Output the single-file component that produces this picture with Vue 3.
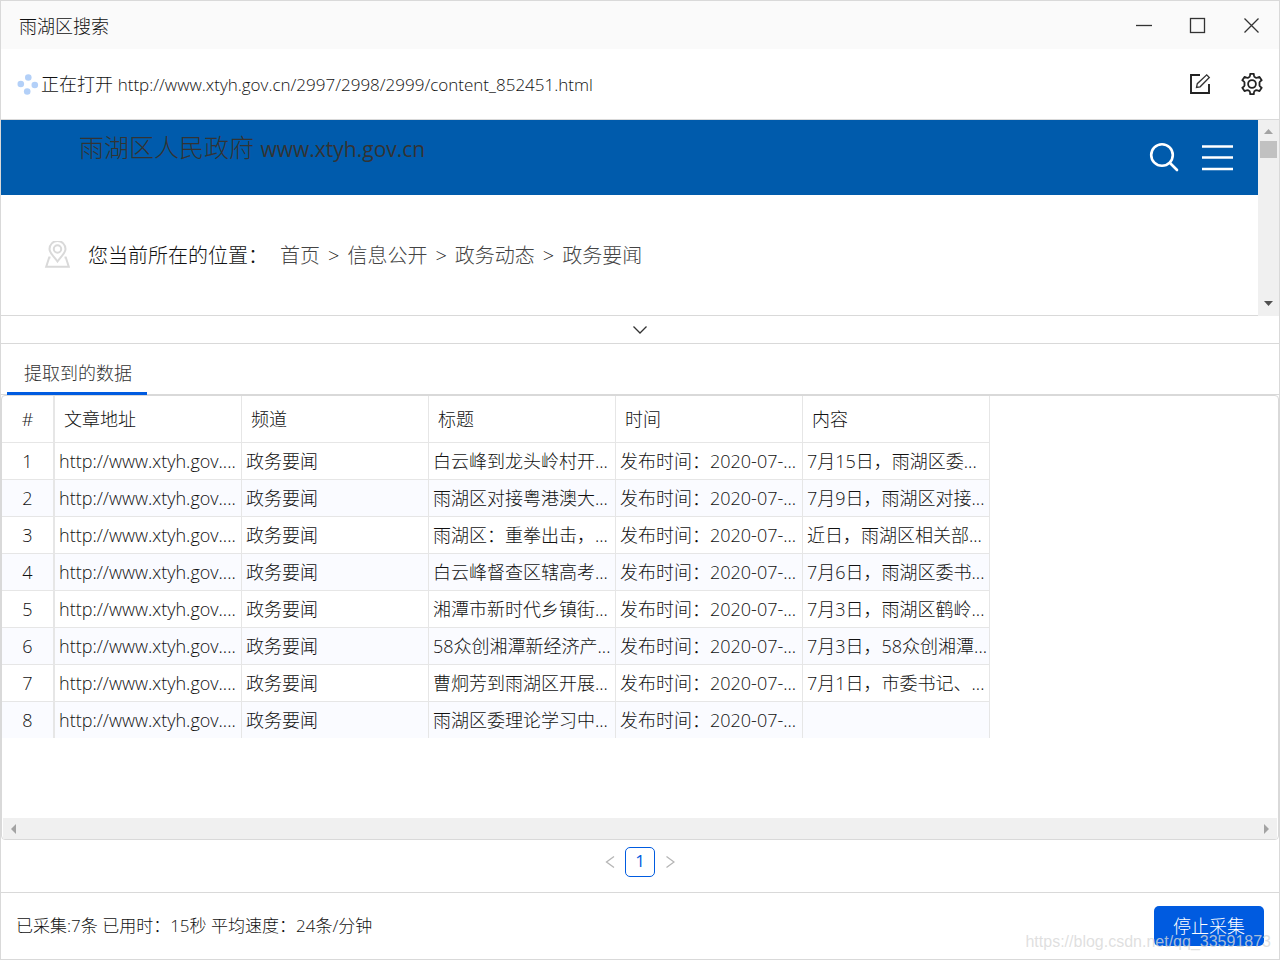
<script setup>
import { ref } from 'vue'

const columns = ['文章地址', '频道', '标题', '时间', '内容']
const url = 'http://www.xtyh.gov....'
const time = '发布时间：2020-07-...'
const rows = [
  ['白云峰到龙头岭村开...', '7月15日，雨湖区委...'],
  ['雨湖区对接粤港澳大...', '7月9日，雨湖区对接...'],
  ['雨湖区：重拳出击，...', '近日，雨湖区相关部...'],
  ['白云峰督查区辖高考...', '7月6日，雨湖区委书...'],
  ['湘潭市新时代乡镇街...', '7月3日，雨湖区鹤岭...'],
  ['58众创湘潭新经济产...', '7月3日，58众创湘潭...'],
  ['曹炯芳到雨湖区开展...', '7月1日，市委书记、...'],
  ['雨湖区委理论学习中...', ''],
].map(([title, content]) => [url, '政务要闻', title, time, content])
const crumbs = ['首页', '信息公开', '政务动态', '政务要闻']
const page = ref(1)
</script>

<template>
  <div class="window" lang="zh-CN">
    <header class="titlebar">
      <h1>雨湖区搜索</h1>
      <div class="controls">
        <button type="button" aria-label="最小化">
          <svg width="18" height="18" viewBox="0 0 18 18"><path d="M2 8.500h16" /></svg>
        </button>
        <button type="button" aria-label="最大化">
          <svg width="18" height="18" viewBox="0 0 18 18"><rect x="2.500" y="1.500" width="14" height="14" /></svg>
        </button>
        <button type="button" aria-label="关闭">
          <svg width="18" height="18" viewBox="0 0 18 18"><path d="M2.500 1.500l14 14M16.500 1.500l-14 14" /></svg>
        </button>
      </div>
    </header>

    <div class="toolbar">
      <svg class="spinner" width="22" height="22" viewBox="0 0 22 22">
        <circle cx="11.300" cy="4.500" r="3.300" /><circle cx="3.800" cy="11" r="3.300" />
        <circle cx="17.800" cy="12" r="3.300" /><circle cx="10.200" cy="18.500" r="3.300" />
      </svg>
      <span class="status">正在打开 <span class="address">http://www.xtyh.gov.cn/2997/2998/2999/content_852451.html</span></span>
      <div class="tools">
        <button type="button" aria-label="编辑">
          <svg width="24" height="24" viewBox="0 0 24 24">
            <path class="thick" d="M12 3H3v18h18v-9" />
            <path d="M8.500 15.500l.8-3.800L18.700 2.900l2.600 2.600-9.200 9.300z" />
          </svg>
        </button>
        <button type="button" aria-label="设置">
          <svg width="24" height="24" viewBox="0 0 24 24">
            <path class="gear" d="M9.700 4.700Q10.100 4.300 10.200 1.900h3.600Q13.900 4.300 14.300 4.700l2 1.200Q17 5.900 19.500 4.900l2.200 3.400Q19.600 9.600 19.500 10.400v3.200Q19.600 14.400 21.700 15.700L19.500 19.100Q17 18.100 16.300 18.100l-2 1.200Q13.900 19.700 13.800 22.100h-3.600Q10.100 19.700 9.700 19.300l-2-1.200Q7 18.100 4.500 19.100L2.300 15.700Q4.400 14.400 4.500 13.600v-3.200Q4.400 9.600 2.300 8.300L4.500 4.900Q7 5.900 7.700 5.900z" />
            <circle class="gear" cx="12" cy="12" r="3.900" />
          </svg>
        </button>
      </div>
    </div>

    <section class="browser">
      <div class="page">
        <div class="banner">
          <div class="site">雨湖区人民政府 <span>www.xtyh.gov.cn</span></div>
          <div class="site-tools">
            <button type="button" aria-label="搜索">
              <svg width="32" height="32" viewBox="0 0 32 32"><circle cx="14" cy="13" r="10.800" /><path d="M22 21l7 7" stroke-linecap="round" /></svg>
            </button>
            <button type="button" aria-label="菜单">
              <svg width="32" height="32" viewBox="0 0 32 32"><path d="M0 4.500h31M0 15.500h31M0 27h31" /></svg>
            </button>
          </div>
        </div>
        <nav class="crumbs" aria-label="当前位置">
          <svg width="26" height="30" viewBox="0 0 26 30">
            <path d="M13.500 20.500C10 15.500 5.500 12 5.500 8a8 8 0 0 1 16 0c0 4-4.500 7.500-8 12.500z" />
            <circle cx="13.500" cy="8" r="3.700" />
            <path d="M6.500 16.500H5.200L2.200 25.800h22.600l-3-9.300H20.500" />
          </svg>
          <span class="here">您当前所在的位置：</span>
          <template v-for="(c, i) in crumbs" :key="c">
            <span v-if="i" class="sep">&gt;</span>
            <a href="#">{{ c }}</a>
          </template>
        </nav>
      </div>
      <div class="vscroll">
        <svg width="9" height="5" viewBox="0 0 9 5"><path fill="#a3a3a3" d="M0 5L4.500 0 9 5z" /></svg>
        <div class="thumb"></div>
        <svg width="9" height="5" viewBox="0 0 9 5"><path fill="#505050" d="M0 0h9L4.500 5z" /></svg>
      </div>
    </section>

    <button type="button" class="collapse" aria-label="收起">
      <svg width="16" height="10" viewBox="0 0 16 10"><path d="M1.500 1.500L8 8l6.500-6.500" /></svg>
    </button>

    <div class="tabs" role="tablist">
      <button type="button" role="tab" aria-selected="true">提取到的数据</button>
    </div>

    <section class="grid">
      <div class="grid-body">
        <table>
          <thead>
            <tr>
              <th scope="col" class="num">#</th>
              <th v-for="c in columns" :key="c" scope="col">{{ c }}</th>
            </tr>
          </thead>
          <tbody>
            <tr v-for="(r, i) in rows" :key="i">
              <td class="num">{{ i + 1 }}</td>
              <td v-for="(cell, j) in r" :key="j">{{ cell }}</td>
            </tr>
          </tbody>
        </table>
      </div>
      <div class="hscroll">
        <svg width="5" height="10" viewBox="0 0 5 10"><path fill="#a3a3a3" d="M5 0v10L0 5z" /></svg>
        <svg width="5" height="10" viewBox="0 0 5 10"><path fill="#a3a3a3" d="M0 0v10l5-5z" /></svg>
      </div>
    </section>

    <nav class="pager" aria-label="分页">
      <button type="button" aria-label="上一页" disabled>
        <svg width="10" height="14" viewBox="0 0 10 14"><path d="M9 1.500L1.500 7 9 12.500" /></svg>
      </button>
      <button type="button" class="current" aria-current="page">{{ page }}</button>
      <button type="button" aria-label="下一页" disabled>
        <svg width="10" height="14" viewBox="0 0 10 14"><path d="M1.500 1.500L9 7 1.500 12.500" /></svg>
      </button>
    </nav>

    <footer class="footer">
      <span class="stats">已采集:7条 已用时：15秒 平均速度：24条/分钟</span>
      <button type="button" class="stop">停止采集</button>
      <span class="watermark">https://blog.csdn.net/qq_33591873</span>
    </footer>
  </div>
</template>

<style>
body {
  margin: 0;
  background: #fff;
}
</style>

<style scoped>
.window {
  box-sizing: border-box;
  min-height: 100vh;
  display: flex;
  flex-direction: column;
  border: 1px solid #d9d9d9;
  background: #fff;
  color: #111;
  font: 300 18px/26px "Open Sans", "Noto Sans CJK SC", sans-serif;
}
button {
  padding: 0;
  border: 0;
  background: none;
  color: inherit;
  font: inherit;
  display: flex;
  align-items: center;
  justify-content: center;
}
svg {
  display: block;
  flex: none;
  fill: none;
  stroke: #333;
  stroke-width: 1.3;
}
.titlebar {
  display: flex;
  align-items: center;
  justify-content: space-between;
  box-sizing: border-box;
  height: 48px;
  padding: 2px 19px 0 18px;
  background: #fafafa;
}
.titlebar h1 {
  margin: 0;
  font: inherit;
}
.controls {
  display: flex;
  gap: 36px;
}
.toolbar {
  display: flex;
  align-items: center;
  height: 70px;
  padding: 0 15px 0 16px;
  border-bottom: 1px solid #d9d9d9;
}
.spinner {
  fill: #b3d0f8;
  stroke: none;
}
.status {
  margin-left: 2px;
}
.address,
.stats {
  font-size: 17px;
}
.tools {
  display: flex;
  gap: 28px;
  margin-left: auto;
}
.thick {
  stroke: #222;
  stroke-width: 1.9;
}
.gear {
  stroke: #222;
  stroke-width: 1.8;
  stroke-linejoin: round;
}
.browser {
  display: flex;
}
.page {
  flex: 1;
  border-bottom: 1px solid #d9d9d9;
}
.banner {
  display: flex;
  justify-content: space-between;
  height: 75px;
  padding: 0 24px 0 78px;
  background: #005bac;
}
.site {
  padding-top: 11px;
  color: #333;
  font-size: 25px;
  line-height: 32px;
}
.site span {
  font-size: 21px;
  font-weight: 400;
}
.site-tools {
  display: flex;
  align-items: center;
  gap: 22px;
}
.site-tools svg {
  stroke: #fff;
  stroke-width: 2.6;
}
.crumbs {
  display: flex;
  align-items: center;
  box-sizing: border-box;
  height: 120px;
  padding: 2px 0 0 43px;
  font-size: 20px;
}
.crumbs svg {
  stroke: #d9d9d9;
  stroke-width: 2;
}
.here {
  margin: 0 12px 0 18px;
}
.crumbs a {
  color: #444;
  text-decoration: none;
}
.sep {
  margin: 0 8px;
}
.vscroll {
  display: flex;
  flex-direction: column;
  align-items: center;
  width: 21px;
  padding: 9px 0 10px;
  box-sizing: border-box;
  background: #f0f0f0;
}
.vscroll svg,
.hscroll svg {
  stroke: none;
}
.thumb {
  width: 17px;
  height: 17px;
  margin: 7px 0 auto;
  background: #c1c1c1;
}
.collapse {
  height: 28px;
  border-bottom: 1px solid #d9d9d9;
}
.tabs {
  display: flex;
  height: 50px;
  padding: 0 6px;
  border-bottom: 1px solid #d9d9d9;
}
.tabs button {
  height: 51px;
  padding: 9px 15px 0 17px;
  box-sizing: border-box;
  border-bottom: 3px solid #005be0;
  color: #333;
}
.grid {
  flex: 1;
  display: flex;
  flex-direction: column;
  border: 1px solid #d9d9d9;
  border-radius: 4px;
}
.grid-body {
  flex: 1;
  overflow: hidden;
}
table {
  width: 988px;
  table-layout: fixed;
  border-collapse: separate;
  border-spacing: 0;
}
th,
td {
  box-sizing: border-box;
  height: 37px;
  padding: 0 4px;
  border-right: 1px solid #e6e6e6;
  border-bottom: 1px solid #e6e6e6;
  text-align: left;
  font-weight: 300;
  white-space: nowrap;
  overflow: hidden;
}
th {
  height: 47px;
  padding: 0 9px;
}
.num {
  width: 53px;
  padding: 0;
  border-right-width: 2px;
  text-align: center;
}
tbody tr:nth-child(even) {
  background: #fafbff;
}
tbody tr:last-child td {
  height: 36px;
  border-bottom: 0;
}
.hscroll {
  display: flex;
  align-items: center;
  justify-content: space-between;
  height: 21px;
  margin: 0 1px;
  padding: 0 8px;
  background: #f0f0f0;
}
.pager {
  display: flex;
  align-items: center;
  justify-content: center;
  gap: 10px;
  height: 44px;
  padding-bottom: 8px;
  border-bottom: 1px solid #d9d9d9;
}
.pager svg {
  stroke: #b5b5b5;
}
.current {
  width: 30px;
  height: 30px;
  box-sizing: border-box;
  padding-bottom: 2px;
  border: 1px solid #005be0;
  border-radius: 5px;
  color: #005be0;
  font-size: 17px;
  font-weight: 400;
}
.footer {
  position: relative;
  display: flex;
  align-items: center;
  justify-content: space-between;
  height: 66px;
  padding: 0 15px;
}
.stop {
  width: 110px;
  height: 40px;
  border-radius: 5px;
  background: #005be0;
  color: #fff;
}
.watermark {
  position: absolute;
  right: 8px;
  bottom: 4px;
  color: rgba(215, 215, 215, 0.8);
  font: 16px/26px "Liberation Sans", sans-serif;
}
</style>
